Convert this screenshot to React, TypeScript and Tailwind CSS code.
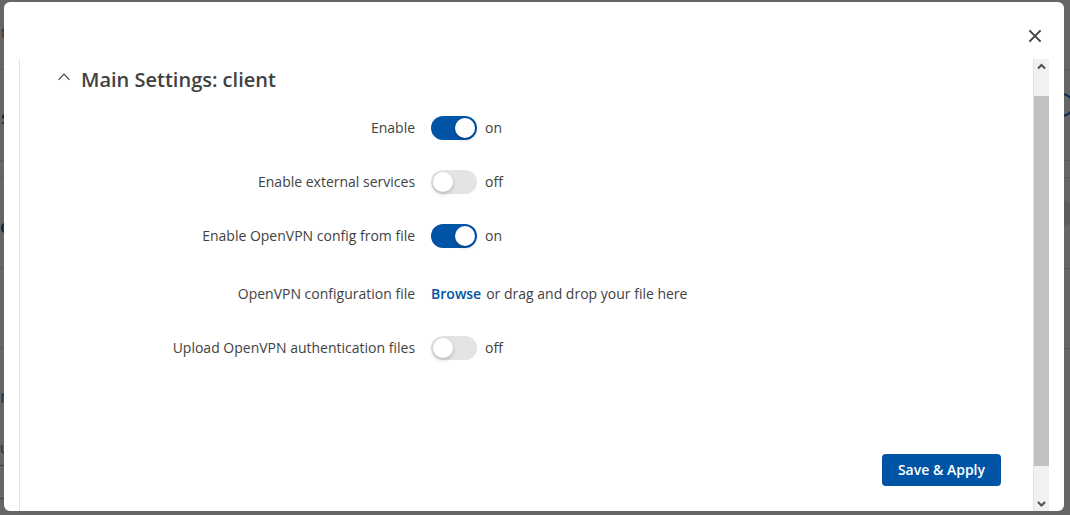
import { useState } from "react";

const backdropLines = [
  "top-[69px] bg-[#5b5b5b]",
  "top-[160px] bg-[#5b5b5b]",
  "top-[177px] bg-[#5b5b5b]",
  "top-[268px] bg-[#5b5b5b]",
  "top-[348px] bg-[#5b5b5b]",
];

const backdropGlyphs = [
  { text: "t", place: "left-px top-[23px] text-sm text-[#3d2f22]" },
  { text: "s", place: "left-px top-[107px] text-lg font-semibold text-[#0b2747]" },
  { text: "e", place: "left-0 top-[216px] text-lg font-semibold text-[#0b2747]" },
  { text: "n", place: "left-0 top-[386px] text-lg text-[#23384c]" },
  { text: "u", place: "left-0 top-[438px] text-sm text-[#2b2420]" },
];

function Backdrop() {
  return (
    <div aria-hidden="true" className="absolute inset-0 overflow-hidden bg-[#666]">
      {backdropLines.map((line) => (
        <div key={line} className={`absolute inset-x-0 h-px ${line}`} />
      ))}
      <div className="absolute left-0 top-[465px] h-px w-1 bg-[#444]" />
      <div className="absolute left-0 top-[498px] h-px w-1 bg-[#444]" />
      {backdropGlyphs.map((glyph) => (
        <span key={glyph.text} className={`absolute leading-5! ${glyph.place}`}>
          {glyph.text}
        </span>
      ))}
      <div className="absolute -right-1 top-[93px] h-6 w-12 rounded-full border-2 border-[#0b2f57]" />
      <div className="absolute right-0 top-[201px] h-6 w-12 rounded bg-[#5c5c5c]" />
    </div>
  );
}

function SwitchRow({ id, label, initial }: { id: string; label: string; initial: boolean }) {
  const [on, setOn] = useState(initial);
  return (
    <div className="flex h-[54px] items-center gap-4">
      <label htmlFor={id} className="w-[39%] text-right">
        {label}
      </label>
      <div className="flex items-center gap-2">
        <input
          id={id}
          type="checkbox"
          role="switch"
          checked={on}
          onChange={(event) => setOn(event.target.checked)}
          className="flex h-6 w-[46px] cursor-pointer appearance-none rounded-full bg-[#e4e4e4] p-0.5 before:size-5 before:rounded-full before:bg-white before:shadow-[0_2px_4px_rgba(0,0,0,0.2)] before:content-[''] checked:justify-end checked:bg-[#0054a6]"
        />
        <span>{on ? "on" : "off"}</span>
      </div>
    </div>
  );
}

function ScrollArrow({ down = false }: { down?: boolean }) {
  return (
    <svg width="15" height="15" viewBox="0 0 15 15" fill="none" stroke="#505050" strokeWidth="2" aria-hidden="true">
      <path d={down ? "M4 6 L7.5 9.5 L11 6" : "M4 9.5 L7.5 6 L11 9.5"} />
    </svg>
  );
}

export default function App() {
  return (
    <div className="relative flex min-h-screen pt-0.5 pr-1.5 pb-1 pl-1 font-['Open_Sans',sans-serif] text-sm text-[#424242]">
      <Backdrop />
      <div
        role="dialog"
        aria-labelledby="dialog-title"
        className="relative flex flex-1 flex-col overflow-hidden rounded-md bg-white"
      >
        <header className="flex h-[57px] items-center justify-end pt-[11px] pr-[21px]">
          <button type="button" aria-label="Close" className="cursor-pointer p-px">
            <svg width="14" height="14" viewBox="0 0 14 14" fill="none" stroke="#424242" strokeWidth="2">
              <path d="M1.4 1.4 L12.6 12.6 M12.6 1.4 L1.4 12.6" />
            </svg>
          </button>
        </header>
        <div className="mr-[15px] ml-[15px] flex flex-1">
          <main className="flex flex-1 flex-col border-x border-[#e2e2e2]">
            <div className="flex h-[42px] items-center pl-[38px]">
              <button type="button" aria-label="Collapse section" className="mb-1.5 cursor-pointer">
                <svg width="12" height="8" viewBox="0 0 12 8" fill="none" stroke="#444" strokeWidth="1.2">
                  <path d="M0.6 6.8 L6 1.2 L11.4 6.8" />
                </svg>
              </button>
              <h2 id="dialog-title" className="ml-[11px] text-xl font-semibold text-[#424242]">
                Main Settings: client
              </h2>
            </div>
            <SwitchRow id="enable" label="Enable" initial={true} />
            <SwitchRow id="external" label="Enable external services" initial={false} />
            <SwitchRow id="from-file" label="Enable OpenVPN config from file" initial={true} />
            <div className="mt-1 flex h-[54px] items-center gap-4">
              <label htmlFor="config-file" className="w-[39%] text-right">
                OpenVPN configuration file
              </label>
              <div className="flex gap-[5px]">
                <label className="cursor-pointer font-semibold text-[#0054a6]">
                  Browse
                  <input id="config-file" type="file" className="sr-only" />
                </label>
                <span>or drag and drop your file here</span>
              </div>
            </div>
            <SwitchRow id="auth-files" label="Upload OpenVPN authentication files" initial={false} />
            <div className="mt-auto flex justify-end pr-8 pb-[25px]">
              <button
                type="button"
                className="h-8 cursor-pointer rounded bg-[#0054a6] px-4 font-semibold text-white"
              >
                Save &amp; Apply
              </button>
            </div>
          </main>
          <div aria-hidden="true" className="flex w-[15px] flex-col bg-[#f1f1f1]">
            <ScrollArrow />
            <div className="mt-[22px] mb-[30px] flex-1 bg-[#c1c1c1]" />
            <ScrollArrow down />
          </div>
        </div>
      </div>
    </div>
  );
}
